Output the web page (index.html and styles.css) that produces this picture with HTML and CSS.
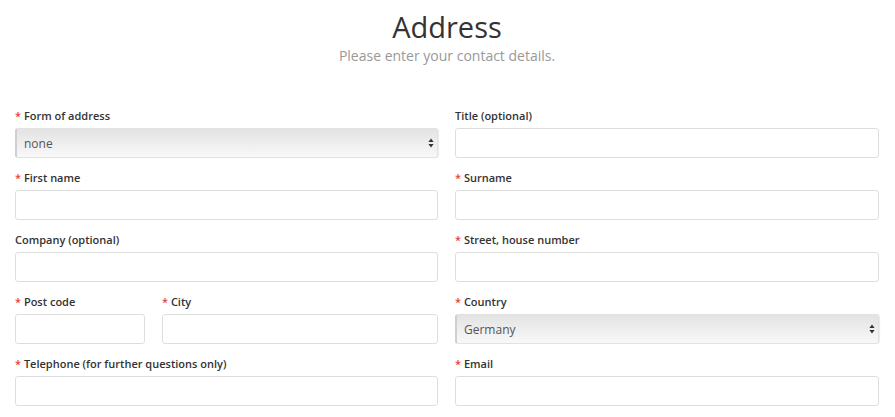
FILE: index.html
```html
<!DOCTYPE html>
<html lang="en">
<head>
<meta charset="utf-8">
<title>Address</title>
<link rel="stylesheet" href="styles.css">
</head>
<body>
<div class="page">
  <header class="head">
    <h1 class="title">Address</h1>
    <p class="subtitle">Please enter your contact details.</p>
  </header>
  <form class="grid">
    <div class="field">
      <label class="label"><span class="req">*</span> Form of address</label>
      <div class="select-wrap">
        <select class="select"><option>none</option></select>
        <svg class="arrows" width="6" height="10" viewBox="0 0 6 10"><path d="M3 0.5 L5.6 4 L0.4 4 Z M3 9.5 L5.6 6 L0.4 6 Z" fill="#333"/></svg>
      </div>
    </div>
    <div class="field">
      <label class="label">Title (optional)</label>
      <input class="input" type="text">
    </div>
    <div class="field">
      <label class="label"><span class="req">*</span> First name</label>
      <input class="input" type="text">
    </div>
    <div class="field">
      <label class="label"><span class="req">*</span> Surname</label>
      <input class="input" type="text">
    </div>
    <div class="field">
      <label class="label">Company (optional)</label>
      <input class="input" type="text">
    </div>
    <div class="field">
      <label class="label"><span class="req">*</span> Street, house number</label>
      <input class="input" type="text">
    </div>
    <div class="split">
      <div class="field">
        <label class="label"><span class="req">*</span> Post code</label>
        <input class="input" type="text">
      </div>
      <div class="field">
        <label class="label"><span class="req">*</span> City</label>
        <input class="input" type="text">
      </div>
    </div>
    <div class="field">
      <label class="label"><span class="req">*</span> Country</label>
      <div class="select-wrap">
        <select class="select"><option>Germany</option></select>
        <svg class="arrows" width="6" height="10" viewBox="0 0 6 10"><path d="M3 0.5 L5.6 4 L0.4 4 Z M3 9.5 L5.6 6 L0.4 6 Z" fill="#333"/></svg>
      </div>
    </div>
    <div class="field">
      <label class="label"><span class="req">*</span> Telephone (for further questions only)</label>
      <input class="input" type="text">
    </div>
    <div class="field">
      <label class="label"><span class="req">*</span> Email</label>
      <input class="input" type="text">
    </div>
  </form>
</div>
</body>
</html>
```

FILE: styles.css
```css
* { box-sizing: border-box; }
html, body { margin: 0; padding: 0; background: #fff; }
body {
  font-family: "Open Sans", "Liberation Sans", sans-serif;
  color: #333;
}
.page {
  padding: 9px 16px 0 15px;
}
.head {
  text-align: center;
}
.title {
  margin: 0;
  font-size: 29px;
  line-height: 36px;
  font-weight: 400;
  color: #333;
}
.subtitle {
  margin: 2px 0 0;
  font-size: 14px;
  line-height: 18px;
  color: #999;
}
.grid {
  margin-top: 43px;
  display: grid;
  grid-template-columns: 423px 424px;
  column-gap: 17px;
  row-gap: 12px;
}
.field {
  display: flex;
  flex-direction: column;
}
.split {
  display: grid;
  grid-template-columns: 130px 1fr;
  column-gap: 17px;
}
.label {
  font-size: 11px;
  line-height: 16px;
  font-weight: 600;
  color: #333;
  margin-bottom: 4px;
}
.req {
  color: #e8413c;
}
.input {
  height: 30px;
  border: 1px solid #dedede;
  border-radius: 3px;
  background: #fff;
  font-family: inherit;
  font-size: 12px;
  padding: 0 8px;
  outline: none;
}
.select-wrap {
  position: relative;
  height: 30px;
}
.select {
  -webkit-appearance: none;
  appearance: none;
  width: 100%;
  height: 30px;
  border: 1px solid #e2e2e2;
  border-left: 2px solid #cfcfcf;
  border-radius: 3px;
  background: linear-gradient(#e3e3e3, #f2f2f2 70%, #f8f8f8);
  font-family: inherit;
  font-size: 12px;
  color: #555;
  padding: 0 7px;
  outline: none;
  box-shadow: 1px 0 1px rgba(0,0,0,0.08);
}
.arrows {
  position: absolute;
  right: 4px;
  top: 10px;
}
```
